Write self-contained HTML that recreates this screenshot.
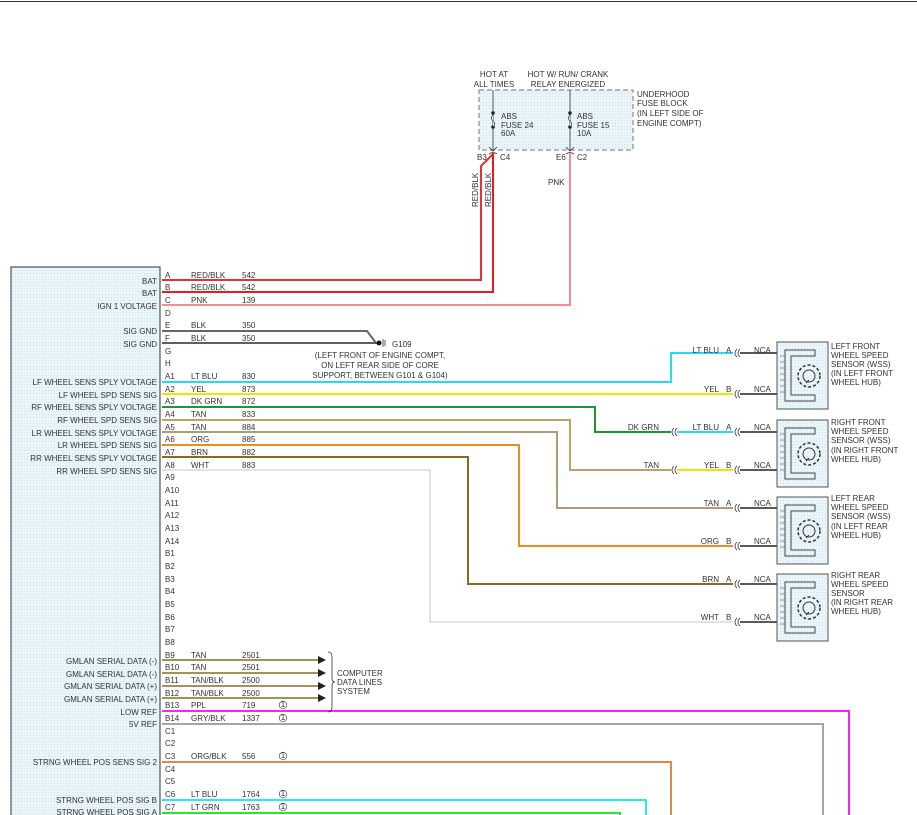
<!DOCTYPE html>
<html><head><meta charset="utf-8"><style>
html,body{margin:0;padding:0;background:#fff;width:917px;height:815px;overflow:hidden}
svg{display:block}
text{font-family:"Liberation Sans",sans-serif;font-size:8px;fill:#333}
.r{text-anchor:end}
.m{text-anchor:middle}
</style></head><body>
<svg width="917" height="815" viewBox="0 0 917 815" xmlns="http://www.w3.org/2000/svg">
<defs>
<pattern id="dt" width="3" height="3" patternUnits="userSpaceOnUse"><rect width="3" height="3" fill="#eaf5f9"/><rect width="1" height="1" fill="#c9e2ec"/></pattern>
<g id="sens">
<rect x="0" y="0" width="51" height="67" fill="url(#dt)" stroke="#555" stroke-width="1"/>
<path d="M38 8 H8 V59 H38 V53 H14 V14 H38 Z" fill="none" stroke="#444" stroke-width="1"/>
<path d="M3 14 H8 M3 20 H8 M3 26 H8 M3 32 H8 M3 38 H8 M3 44 H8 M3 50 H8" stroke="#777" stroke-width="0.8"/>
<circle cx="32" cy="34" r="11" fill="none" stroke="#333" stroke-width="1.5" stroke-dasharray="3,2"/>
<circle cx="32" cy="34" r="6" fill="none" stroke="#333" stroke-width="1"/>
<path d="M32 38 L29 41" stroke="#333"/>
</g>
<path id="cc" d="M4 -4 Q0 0 4 4 M7 -4 Q3 0 7 4" fill="none" stroke="#333" stroke-width="0.8"/>
</defs>
<line x1="0" y1="1.5" x2="917" y2="1.5" stroke="#333" stroke-width="1"/>

<!-- module -->
<rect x="11" y="267" width="149" height="560" fill="url(#dt)" stroke="#333" stroke-width="1"/>

<!-- fuse block -->
<rect x="479" y="90" width="154" height="60" fill="url(#dt)" stroke="#777" stroke-dasharray="5,3"/>
<text class="m" x="494" y="77">HOT AT</text><text class="m" x="494" y="87">ALL TIMES</text>
<text class="m" x="568" y="77">HOT W/ RUN/ CRANK</text><text class="m" x="568" y="87">RELAY ENERGIZED</text>
<text x="637" y="97">UNDERHOOD</text><text x="637" y="106">FUSE BLOCK</text><text x="637" y="116">(IN LEFT SIDE OF</text><text x="637" y="126">ENGINE COMPT)</text>
<path d="M493 90 V151 M570 90 V151" stroke="#333" stroke-width="0.8"/>
<circle cx="493" cy="113" r="1.8" fill="#222"/><circle cx="493" cy="127" r="1.8" fill="#222"/>
<circle cx="570" cy="113" r="1.8" fill="#222"/><circle cx="570" cy="127" r="1.8" fill="#222"/>
<path d="M493 115 q-3 3 0 6 q3 3 0 6 M570 115 q-3 3 0 6 q3 3 0 6" fill="#fff" stroke="#333" stroke-width="0.8"/>
<text x="501" y="119">ABS</text><text x="501" y="128">FUSE 24</text><text x="501" y="136">60A</text>
<text x="577" y="119">ABS</text><text x="577" y="128">FUSE 15</text><text x="577" y="136">10A</text>
<path d="M489 147 L493 151 L497 147 M566 147 L570 151 L574 147 M489 154 q4 -3 8 0 M566 154 q4 -3 8 0" fill="none" stroke="#333" stroke-width="0.8"/>
<text x="477" y="160">B3</text><text x="500" y="160">C4</text><text x="556" y="160">E6</text><text x="577" y="160">C2</text>
<text transform="translate(478,207) rotate(-90)">RED/BLK</text>
<text transform="translate(491,207) rotate(-90)">RED/BLK</text>
<text x="548" y="185">PNK</text>

<!-- wires -->
<g fill="none" stroke-width="2">
<path d="M162 280 H481 V166 L494 153" stroke="#e8302e"/>
<path d="M162 292 H493 V153" stroke="#e61c1c"/>
<path d="M162 305 H570 V153" stroke="#f58c98"/>
<path d="M162 331 H367 L376 343" stroke="#666"/>
<path d="M162 343 H378" stroke="#556655"/>
<path d="M162 382 H671 V353 H733" stroke="#22ddee"/>
<path d="M162 394 H733" stroke="#f2e400"/>
<path d="M162 407 H595 V432 H671" stroke="#1a9a2a"/>
<path d="M677 432 H733" stroke="#22ddee"/>
<path d="M162 420 H570 V470 H671" stroke="#c2a060"/>
<path d="M677 470 H733" stroke="#f2e400"/>
<path d="M162 432 H557 V508 H733" stroke="#b09a78"/>
<path d="M162 445 H519 V546 H733" stroke="#f08a20"/>
<path d="M162 457 H468 V584 H733" stroke="#8a6a20"/>
<path d="M162 470 H430 V622 H733" stroke="#d8d8d8" stroke-width="1.5"/>
<path d="M162 660 H318 M162 673 H318 M162 686 H318 M162 698 H318" stroke="#a8905a"/>
<path d="M162 711 H849 V815" stroke="#ff22ee"/>
<path d="M162 724 H823 V815" stroke="#a0a8a0"/>
<path d="M162 762 H671 V815" stroke="#d88a50"/>
<path d="M162 800 H646 V815" stroke="#22eeee"/>
<path d="M162 813 H620 V815" stroke="#22ee22"/>
<path d="M740 353 H777 M740 394 H777 M740 432 H777 M740 470 H777 M740 508 H777 M740 546 H777 M740 584 H777 M740 622 H777" stroke="#222" stroke-width="1.5"/>
</g>
<g fill="#222"><path d="M318 656 L326 660 L318 664Z M318 669 L326 673 L318 677Z M318 682 L326 686 L318 690Z M318 694 L326 698 L318 702Z"/></g>
<path d="M328 652 q4 0 4 5 V678 q0 4 3 4 q-3 0 -3 4 V707 q0 5 -4 5" fill="none" stroke="#333" stroke-width="0.8"/>
<text x="337" y="676">COMPUTER</text><text x="337" y="685">DATA LINES</text><text x="337" y="694">SYSTEM</text>
<circle cx="379" cy="343" r="2.5" fill="#111"/>
<path d="M383 339 V347 M385 340 V346" stroke="#333" stroke-width="0.8"/>
<text x="392" y="347">G109</text>
<text class="m" x="380" y="358">(LEFT FRONT OF ENGINE COMPT,</text>
<text class="m" x="380" y="368">ON LEFT REAR SIDE OF CORE</text>
<text class="m" x="380" y="378">SUPPORT, BETWEEN G101 &amp; G104)</text>

<!-- connectors -->
<use href="#cc" x="733" y="353"/><use href="#cc" x="733" y="394"/><use href="#cc" x="733" y="432"/><use href="#cc" x="733" y="470"/>
<use href="#cc" x="733" y="508"/><use href="#cc" x="733" y="546"/><use href="#cc" x="733" y="584"/><use href="#cc" x="733" y="622"/>
<use href="#cc" x="670" y="432"/><use href="#cc" x="670" y="470"/>
<g>
<text class="r" x="719" y="353">LT BLU</text><text x="726" y="353">A</text>
<text class="r" x="719" y="392">YEL</text><text x="726" y="392">B</text>
<text class="r" x="659" y="430">DK GRN</text>
<text class="r" x="719" y="430">LT BLU</text><text x="726" y="430">A</text>
<text class="r" x="659" y="468">TAN</text>
<text class="r" x="719" y="468">YEL</text><text x="726" y="468">B</text>
<text class="r" x="719" y="506">TAN</text><text x="726" y="506">A</text>
<text class="r" x="719" y="544">ORG</text><text x="726" y="544">B</text>
<text class="r" x="719" y="582">BRN</text><text x="726" y="582">A</text>
<text class="r" x="719" y="620">WHT</text><text x="726" y="620">B</text>
<text x="754" y="353">NCA</text><text x="754" y="392">NCA</text><text x="754" y="430">NCA</text><text x="754" y="468">NCA</text>
<text x="754" y="506">NCA</text><text x="754" y="544">NCA</text><text x="754" y="582">NCA</text><text x="754" y="620">NCA</text>
</g>
<use href="#sens" x="777" y="342"/><use href="#sens" x="777" y="420"/><use href="#sens" x="777" y="497"/><use href="#sens" x="777" y="574"/>
<text x="831" y="349">LEFT FRONT</text><text x="831" y="358">WHEEL SPEED</text><text x="831" y="367">SENSOR (WSS)</text><text x="831" y="376">(IN LEFT FRONT</text><text x="831" y="385">WHEEL HUB)</text>
<text x="831" y="425">RIGHT FRONT</text><text x="831" y="434">WHEEL SPEED</text><text x="831" y="443">SENSOR (WSS)</text><text x="831" y="453">(IN RIGHT FRONT</text><text x="831" y="462">WHEEL HUB)</text>
<text x="831" y="501">LEFT REAR</text><text x="831" y="510">WHEEL SPEED</text><text x="831" y="519">SENSOR (WSS)</text><text x="831" y="529">(IN LEFT REAR</text><text x="831" y="538">WHEEL HUB)</text>
<text x="831" y="578">RIGHT REAR</text><text x="831" y="587">WHEEL SPEED</text><text x="831" y="596">SENSOR</text><text x="831" y="605">(IN RIGHT REAR</text><text x="831" y="614">WHEEL HUB)</text>

<!-- pins -->
<g>
<text x="165" y="278">A</text><text x="165" y="290">B</text><text x="165" y="303">C</text><text x="165" y="316">D</text><text x="165" y="328">E</text><text x="165" y="341">F</text><text x="165" y="354">G</text><text x="165" y="366">H</text>
<text x="165" y="379">A1</text><text x="165" y="392">A2</text><text x="165" y="404">A3</text><text x="165" y="417">A4</text><text x="165" y="430">A5</text><text x="165" y="442">A6</text><text x="165" y="455">A7</text><text x="165" y="468">A8</text>
<text x="165" y="480">A9</text><text x="165" y="493">A10</text><text x="165" y="506">A11</text><text x="165" y="518">A12</text><text x="165" y="531">A13</text><text x="165" y="544">A14</text>
<text x="165" y="556">B1</text><text x="165" y="569">B2</text><text x="165" y="582">B3</text><text x="165" y="594">B4</text><text x="165" y="607">B5</text><text x="165" y="620">B6</text><text x="165" y="632">B7</text><text x="165" y="645">B8</text>
<text x="165" y="658">B9</text><text x="165" y="670">B10</text><text x="165" y="683">B11</text><text x="165" y="696">B12</text><text x="165" y="708">B13</text><text x="165" y="721">B14</text>
<text x="165" y="734">C1</text><text x="165" y="746">C2</text><text x="165" y="759">C3</text><text x="165" y="772">C4</text><text x="165" y="784">C5</text><text x="165" y="797">C6</text><text x="165" y="810">C7</text>
</g>
<g>
<text x="191" y="278">RED/BLK</text><text x="242" y="278">542</text>
<text x="191" y="290">RED/BLK</text><text x="242" y="290">542</text>
<text x="191" y="303">PNK</text><text x="242" y="303">139</text>
<text x="191" y="328">BLK</text><text x="242" y="328">350</text>
<text x="191" y="341">BLK</text><text x="242" y="341">350</text>
<text x="191" y="379">LT BLU</text><text x="242" y="379">830</text>
<text x="191" y="392">YEL</text><text x="242" y="392">873</text>
<text x="191" y="404">DK GRN</text><text x="242" y="404">872</text>
<text x="191" y="417">TAN</text><text x="242" y="417">833</text>
<text x="191" y="430">TAN</text><text x="242" y="430">884</text>
<text x="191" y="442">ORG</text><text x="242" y="442">885</text>
<text x="191" y="455">BRN</text><text x="242" y="455">882</text>
<text x="191" y="468">WHT</text><text x="242" y="468">883</text>
<text x="191" y="658">TAN</text><text x="242" y="658">2501</text>
<text x="191" y="670">TAN</text><text x="242" y="670">2501</text>
<text x="191" y="683">TAN/BLK</text><text x="242" y="683">2500</text>
<text x="191" y="696">TAN/BLK</text><text x="242" y="696">2500</text>
<text x="191" y="708">PPL</text><text x="242" y="708">719</text>
<text x="191" y="721">GRY/BLK</text><text x="242" y="721">1337</text>
<text x="191" y="759">ORG/BLK</text><text x="242" y="759">556</text>
<text x="191" y="797">LT BLU</text><text x="242" y="797">1764</text>
<text x="191" y="810">LT GRN</text><text x="242" y="810">1763</text>
</g>
<g fill="none" stroke="#444" stroke-width="0.7">
<circle cx="283" cy="705" r="3.8"/><circle cx="283" cy="718" r="3.8"/><circle cx="283" cy="756" r="3.8"/><circle cx="283" cy="794" r="3.8"/><circle cx="283" cy="807" r="3.8"/>
</g>
<g style="font-size:6px">
<text class="m" x="283" y="707">1</text><text class="m" x="283" y="720">1</text><text class="m" x="283" y="758">1</text><text class="m" x="283" y="796">1</text><text class="m" x="283" y="809">1</text>
</g>
<g>
<text class="r" x="157" y="284">BAT</text>
<text class="r" x="157" y="296">BAT</text>
<text class="r" x="157" y="309">IGN 1 VOLTAGE</text>
<text class="r" x="157" y="334">SIG GND</text>
<text class="r" x="157" y="347">SIG GND</text>
<text class="r" x="157" y="385">LF WHEEL SENS SPLY VOLTAGE</text>
<text class="r" x="157" y="398">LF WHEEL SPD SENS SIG</text>
<text class="r" x="157" y="410">RF WHEEL SENS SPLY VOLTAGE</text>
<text class="r" x="157" y="423">RF WHEEL SPD SENS SIG</text>
<text class="r" x="157" y="436">LR WHEEL SENS SPLY VOLTAGE</text>
<text class="r" x="157" y="448">LR WHEEL SPD SENS SIG</text>
<text class="r" x="157" y="461">RR WHEEL SENS SPLY VOLTAGE</text>
<text class="r" x="157" y="474">RR WHEEL SPD SENS SIG</text>
<text class="r" x="157" y="664">GMLAN SERIAL DATA (-)</text>
<text class="r" x="157" y="677">GMLAN SERIAL DATA (-)</text>
<text class="r" x="157" y="689">GMLAN SERIAL DATA (+)</text>
<text class="r" x="157" y="702">GMLAN SERIAL DATA (+)</text>
<text class="r" x="157" y="715">LOW REF</text>
<text class="r" x="157" y="727">5V REF</text>
<text class="r" x="157" y="765">STRNG WHEEL POS SENS SIG 2</text>
<text class="r" x="157" y="803">STRNG WHEEL POS SIG B</text>
<text class="r" x="157" y="815">STRNG WHEEL POS SIG A</text>
</g>
</svg>
</body></html>
